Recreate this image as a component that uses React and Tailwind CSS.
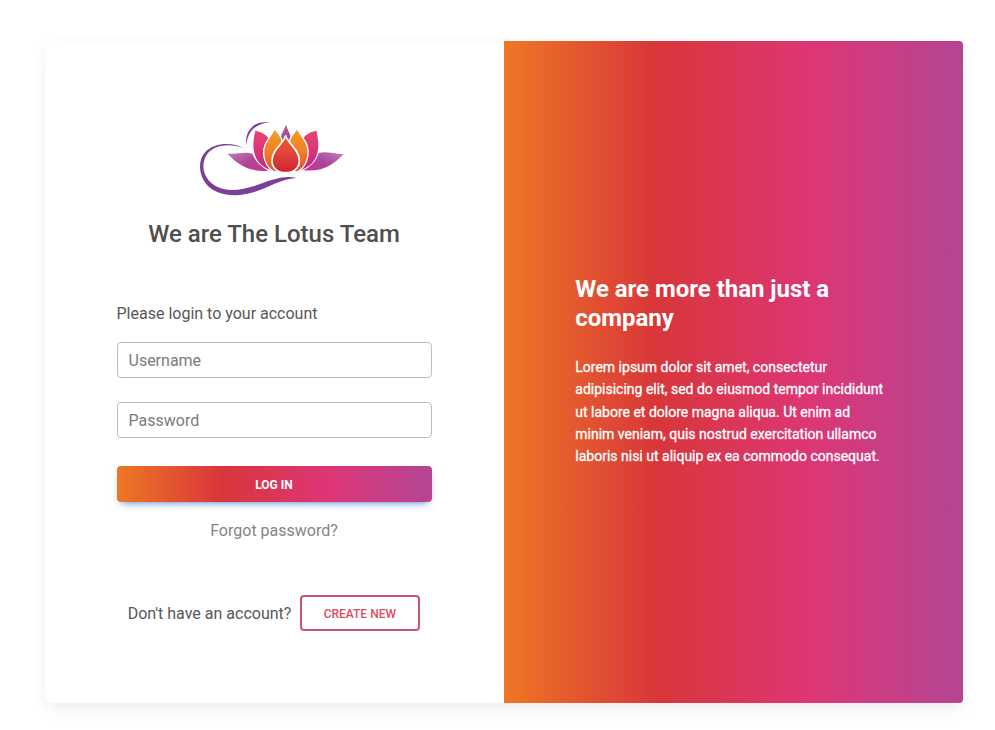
const gradient = 'bg-[linear-gradient(to_right,#ee7724,#d8363a,#dd3675,#b44593)]';

function LotusLogo() {
  return (
    <svg className="mr-1 h-[95px] w-[165px]" viewBox="0 0 495 285" role="img" aria-label="Lotus">
      <defs>
        <linearGradient id="leafLeft" x1="0" y1="0" x2="1" y2="1">
          <stop offset="0" stopColor="#bd82b9" />
          <stop offset=".5" stopColor="#b04596" />
          <stop offset="1" stopColor="#c8328c" />
        </linearGradient>
        <linearGradient id="leafRight" x1="1" y1="0" x2="0" y2="1">
          <stop offset="0" stopColor="#bd82b9" />
          <stop offset=".5" stopColor="#a9479c" />
          <stop offset="1" stopColor="#c8328c" />
        </linearGradient>
        <linearGradient id="outerPetal" x1="0" y1="0" x2="0" y2="1">
          <stop offset="0" stopColor="#e54870" />
          <stop offset=".6" stopColor="#d8307c" />
          <stop offset="1" stopColor="#bb2a80" />
        </linearGradient>
        <linearGradient id="innerPetal" x1="0" y1="0" x2="0" y2="1">
          <stop offset="0" stopColor="#f3a01f" />
          <stop offset=".5" stopColor="#f08228" />
          <stop offset="1" stopColor="#e25030" />
        </linearGradient>
        <linearGradient id="centerPetal" x1="0" y1="0" x2="0" y2="1">
          <stop offset="0" stopColor="#ea5f2e" />
          <stop offset=".5" stopColor="#e0443a" />
          <stop offset="1" stopColor="#cf2030" />
        </linearGradient>
        <linearGradient id="tipPetal" x1="0" y1="0" x2="0" y2="1">
          <stop offset="0" stopColor="#c65392" />
          <stop offset="1" stopColor="#8c489f" />
        </linearGradient>
      </defs>
      <path fill="#7b3f98" d="M162 115C125 95 73 98 46 126C20 153 26 207 62 235C94 260 151 260 193 246C240 231 270 208 319 204C286 196 254 207 216 220C166 238 119 248 83 231C46 214 29 174 48 138C66 105 115 98 162 115Z" />
      <path fill="#7b3f98" d="M169 105C163 65 191 29 238 38C200 38 173 63 169 105Z" />
      <path fill="url(#leafLeft)" d="M112 131C139 134 164 123 187 131C195 153 211 169 235 182C177 187 145 164 112 131Z" />
      <path fill="url(#leafRight)" d="M461 132C434 133 410 123 386 129C380 152 364 169 340 181C398 186 430 165 461 132Z" />
      <path fill="url(#outerPetal)" d="M196 62C222 66 237 81 244 100L247 182C197 165 180 128 196 62Z" />
      <path fill="url(#outerPetal)" d="M379 62C353 66 338 81 331 100L328 182C378 165 395 128 379 62Z" />
      <path fill="url(#tipPetal)" d="M288 44C293 61 302 72 302 84L300 106H275L273 84C273 72 282 61 288 44Z" />
      <path fill="url(#innerPetal)" stroke="#fff" strokeWidth="4" d="M255 55C240 84 217 102 221 135C224 160 238 177 251 185H270L276 92C274 78 265 74 255 55Z" />
      <path fill="url(#innerPetal)" stroke="#fff" strokeWidth="4" d="M321 55C336 84 359 102 354 135C351 160 337 177 324 185H305L299 92C301 78 311 74 321 55Z" />
      <path fill="url(#centerPetal)" stroke="#fff" strokeWidth="5" d="M287 76C281 102 246 117 246 152C246 175 264 188 287 188C310 188 328 175 328 152C328 117 293 102 287 76Z" />
    </svg>
  );
}

function Field({ type, placeholder, className }) {
  return (
    <input
      type={type}
      placeholder={placeholder}
      className={`block h-9 w-full rounded border border-[#bdbdbd] px-[10.5px] text-base text-[#4f4f4f] placeholder:text-[#7b7b7b] ${className}`}
    />
  );
}

export default function App() {
  return (
    <main className="flex h-[730px] w-full bg-white pt-[41px] pl-[45px] font-['Roboto',sans-serif] text-[#4f4f4f]">
      <section className="flex h-[662px] w-[918px] overflow-hidden rounded-l-lg rounded-r bg-white shadow-[0_2px_15px_-3px_rgba(0,0,0,0.07),0_10px_20px_-2px_rgba(0,0,0,0.04)]">
        <div className="flex w-1/2 flex-col px-[72px] pt-[69px]">
          <div className="flex justify-center">
            <LotusLogo />
          </div>
          <h4 className="mt-[13px] pr-px text-center text-2xl leading-8 font-medium">We are The Lotus Team</h4>
          <p className="mt-[52px] -ml-[0.5px] text-base leading-6 text-[#585858]">Please login to your account</p>
          <Field type="text" placeholder="Username" className="mt-4" />
          <Field type="password" placeholder="Password" className="mt-6" />
          <button className={`mt-7 h-9 w-full shrink-0 rounded pt-0.5 pr-px text-xs font-bold text-white shadow-[0_4px_9px_-4px_#3b71ca] ${gradient}`}>
            LOG IN
          </button>
          <a className="mt-[17px] pr-px text-center text-base leading-6 text-[#858585]">Forgot password?</a>
          <div className="mt-[52px] flex items-center justify-center gap-2">
            <p className="-ml-px pt-0.5 pr-px text-base text-[#585858]">Don't have an account?</p>
            <button className="h-9 w-[120px] rounded border-2 border-[#c9566c] pt-0.5 pr-px text-xs font-medium text-[#dc4c64]">
              CREATE NEW
            </button>
          </div>
        </div>
        <div className={`flex w-1/2 flex-col justify-center pr-[70.5px] pl-[71.3px] text-white ${gradient}`}>
          <h4 className="text-2xl leading-[29px] font-bold tracking-[-0.03px]">We are more than just a company</h4>
          <p className="mt-[23px] mb-[1.5px] text-sm leading-[22.3px] font-normal [-webkit-text-stroke:0.3px_white]">
            Lorem ipsum dolor sit amet, consectetur adipisicing elit, sed do eiusmod tempor incididunt ut labore et
            dolore magna aliqua. Ut enim ad minim veniam, quis nostrud exercitation ullamco laboris nisi ut aliquip ex
            ea commodo consequat.
          </p>
        </div>
      </section>
    </main>
  );
}
